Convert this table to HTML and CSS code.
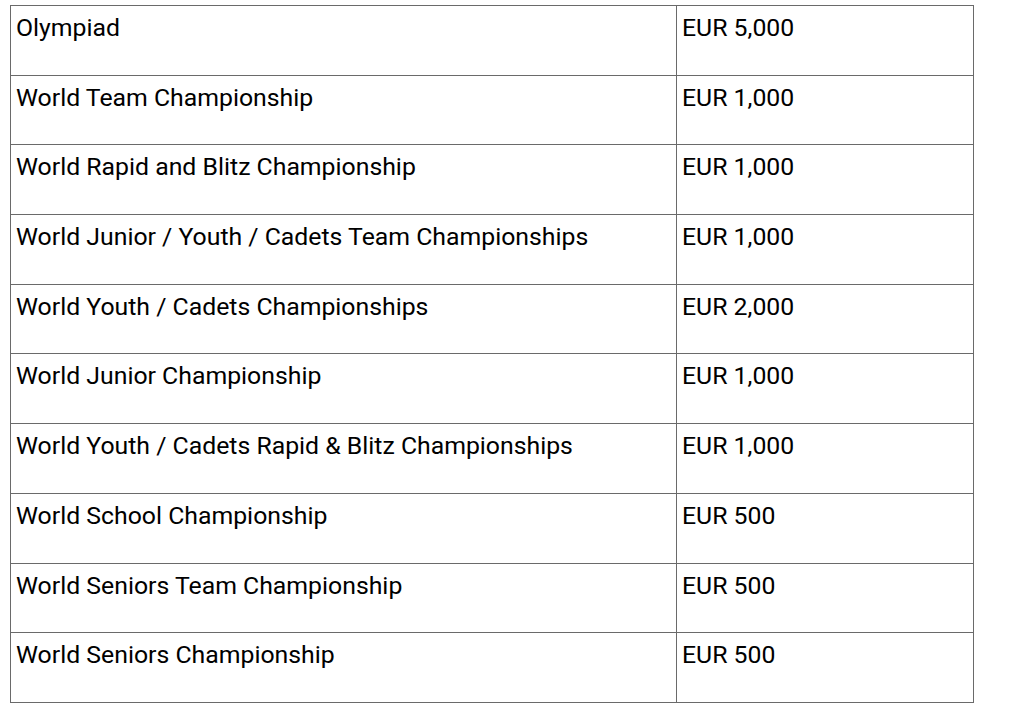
FILE: index.html
```html
<!DOCTYPE html>
<html>
<head>
<meta charset="utf-8">
<link rel="stylesheet" href="styles.css">
</head>
<body>
<table class="fees">
<tbody>
<tr><td class="name">Olympiad</td><td class="fee">EUR 5,000</td></tr>
<tr><td class="name">World Team Championship</td><td class="fee">EUR 1,000</td></tr>
<tr><td class="name">World Rapid and Blitz Championship</td><td class="fee">EUR 1,000</td></tr>
<tr><td class="name">World Junior / Youth / Cadets Team Championships</td><td class="fee">EUR 1,000</td></tr>
<tr><td class="name">World Youth / Cadets Championships</td><td class="fee">EUR 2,000</td></tr>
<tr><td class="name">World Junior Championship</td><td class="fee">EUR 1,000</td></tr>
<tr><td class="name">World Youth / Cadets Rapid &amp; Blitz Championships</td><td class="fee">EUR 1,000</td></tr>
<tr><td class="name">World School Championship</td><td class="fee">EUR 500</td></tr>
<tr><td class="name">World Seniors Team Championship</td><td class="fee">EUR 500</td></tr>
<tr><td class="name">World Seniors Championship</td><td class="fee">EUR 500</td></tr>
</tbody>
</table>
<p class="note">The bidding fees are payable with the submission of the application and are not refundable.</p>
</body>
</html>
```
FILE: styles.css
```css
html, body {
  margin: 0;
  padding: 0;
  background: #fff;
}
body {
  padding: 5px 0 0 10px;
  font-family: Roboto, "Liberation Sans", sans-serif;
  color: #000;
  overflow: hidden;
}
.fees {
  border-collapse: collapse;
  width: 964px;
  table-layout: fixed;
}
.fees td {
  border: 1px solid #6a6a6a;
  height: 69.7px;
  box-sizing: border-box;
  padding: 7px 5px 6px 5px;
  vertical-align: top;
  font-size: 24.8px;
  line-height: 29px;
}
.fees td.name {
  width: 666px;
}
.note {
  margin: 6px 0 0 0;
  font-size: 24.8px;
  color: #444;
}
```
